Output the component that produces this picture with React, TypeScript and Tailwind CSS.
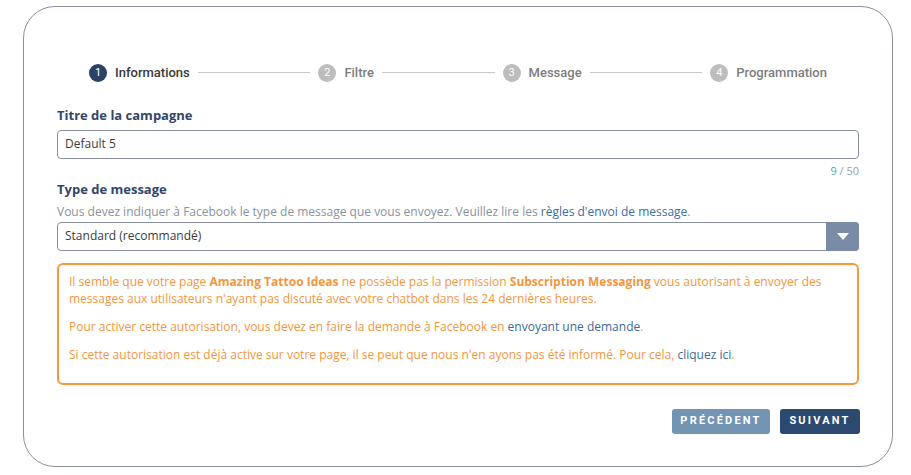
import { Fragment } from "react";

const steps = ["Informations", "Filtre", "Message", "Programmation"];

function Stepper() {
  return (
    <div className="flex items-center px-8 font-['Roboto',sans-serif] text-[13px]">
      {steps.map((s, i) => {
        const active = i === 0;
        return (
          <Fragment key={s}>
            <div className="flex items-center">
              <span
                className={`w-[18px] h-[18px] rounded-full flex items-center justify-center text-[11px] text-white ${
                  active ? "bg-[#2b4266]" : "bg-[#bdbdbd]"
                }`}
              >
                {i + 1}
              </span>
              <span className={`ml-2 font-medium ${active ? "text-[#3a3a3a]" : "text-[#7d7d7d]"}`}>{s}</span>
            </div>
            {i < steps.length - 1 && <span className="flex-1 h-px bg-[#c9c9c9] mx-2" />}
          </Fragment>
        );
      })}
    </div>
  );
}

export default function App() {
  return (
    <div className="w-[911px] h-[475px] bg-white pt-[6px] pl-[23px] font-['Open_Sans',sans-serif]">
      <div className="w-[870px] h-[461px] border border-[#8b90a0] rounded-[32px] px-[33px] pt-[56px]">
        <Stepper />

        <div className="mt-[23px] text-[13px] leading-[18px] font-bold text-[#33466a]">Titre de la campagne</div>
        <div className="mt-[6px] h-[29px] border border-[#8b90a0] rounded-[4px] flex items-center px-[7px] text-[12px] text-[#3c3c3c]">
          Default 5
        </div>
        <div className="mt-[5px] text-right text-[11px] leading-[14px] text-[#9aa0a8]">
          <span className="text-[#4caa8e]">9</span> / 50
        </div>

        <div className="mt-[2px] text-[13px] leading-[18px] font-bold text-[#33466a]">Type de message</div>
        <div className="mt-[6px] text-[12px] leading-[16px] text-[#8a929c]">
          Vous devez indiquer à Facebook le type de message que vous envoyez. Veuillez lire les{" "}
          <span className="text-[#3b6e9e]">règles d'envoi de message</span>.
        </div>
        <div className="mt-[2px] h-[29px] border border-[#8b90a0] rounded-[4px] flex items-stretch text-[12px] text-[#3c3c3c]">
          <div className="flex-1 flex items-center px-[7px]">Standard (recommandé)</div>
          <div className="w-[33px] -my-px -mr-px bg-[#7a8ba6] rounded-r-[4px] flex items-center justify-center">
            <svg width="14" height="9" viewBox="0 0 14 9">
              <path d="M1 1h12L7 8z" fill="white" />
            </svg>
          </div>
        </div>

        <div className="mt-3 border-2 border-[#f39a3c] rounded-[6px] px-[10px] pt-[8px] pb-[9px] text-[12px] leading-[17px] text-[#f29640]">
          <p className="mb-[11px]">
            Il semble que votre page <b>Amazing Tattoo Ideas</b> ne possède pas la permission{" "}
            <b>Subscription Messaging</b> vous autorisant à envoyer des messages aux utilisateurs n'ayant pas
            discuté avec votre chatbot dans les 24 dernières heures.
          </p>
          <p className="mb-[11px]">
            Pour activer cette autorisation, vous devez en faire la demande à Facebook en{" "}
            <span className="text-[#3d6a98]">envoyant une demande</span>.
          </p>
          <p className="mb-[11px]">
            Si cette autorisation est déjà active sur votre page, il se peut que nous n'en ayons pas été informé.
            Pour cela, <span className="text-[#3d6a98]">cliquez ici</span>.
          </p>
        </div>

        <div className="mt-[24px] flex justify-end gap-[10px] font-['Roboto',sans-serif] text-[11px] font-bold tracking-[0.2em] text-white">
          <button className="w-[98px] h-[25px] rounded-[3px] bg-[#7494b4]">PRÉCÉDENT</button>
          <button className="w-[80px] h-[25px] rounded-[3px] bg-[#2c4a70] -mr-px">SUIVANT</button>
        </div>
      </div>
    </div>
  );
}
